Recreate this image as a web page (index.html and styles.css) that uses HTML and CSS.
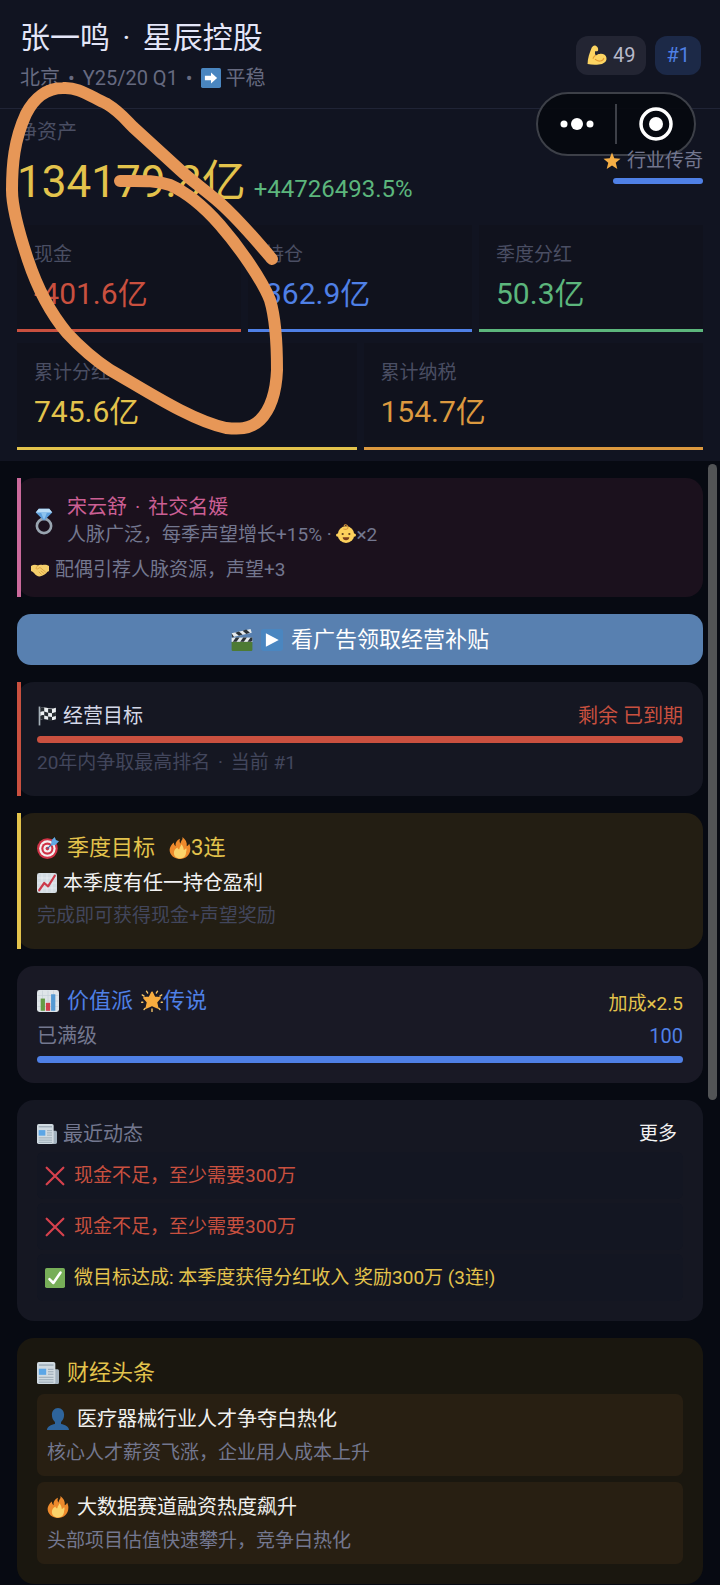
FILE: index.html
```html
<!DOCTYPE html>
<html lang="zh-CN">
<head>
    <meta charset="UTF-8">
    <meta name="viewport" content="width=device-width, initial-scale=1.0">
    <title>星辰控股</title>
    <link rel="stylesheet" href="styles.css">
</head>
<body>
    <!-- Icon set -->
    <svg class="sprite" aria-hidden="true">
        <symbol id="i-arrow" viewBox="0 0 36 36">
            <rect width="36" height="36" rx="3" fill="#4a86c0"/>
            <path fill="#fff" d="M29 18 18 8v6H7v8h11v6z"/>
        </symbol>
        <symbol id="i-muscle" viewBox="0 0 36 36">
            <path fill="#fcd462" d="M15 1c-3-1-6 2-7 5C5 14 1 24 1 34c8 2 19 2 26 0 6-2 9-6 8-11s-6-8-12-7c-3 0-5 1-7 3-2-2-2-5-1-8 3 1 5 0 5-2 1-3-2-7-5-8z"/>
            <path fill="none" stroke="#e39a33" stroke-width="2" stroke-linecap="round" d="M15 19c-2 1-3 3-4 5m4 2c5 5 14 3 15-2"/>
        </symbol>
        <symbol id="i-star" viewBox="0 0 36 36">
            <path fill="#f5ae45" d="M18 1l4.600 11.400L35 13.300l-9.500 8L28.600 34 18 27.200 7.400 34l3.100-12.700L1 13.300l12.400-.9z"/>
        </symbol>
        <symbol id="i-ring" viewBox="0 0 26 36">
            <circle cx="13" cy="24" r="9.500" fill="none" stroke="#99a5b0" stroke-width="3.500"/>
            <path fill="#5d9fdc" d="M6 1h14l4 5-11 11L2 6z"/>
            <path fill="#b9dcf5" d="M6 1h14l4 5H2z"/>
            <path fill="#8cc3ee" d="M9 6h8l-4 10z"/>
        </symbol>
        <symbol id="i-baby" viewBox="0 0 36 36">
            <circle cx="18" cy="19" r="15" fill="#fcd05c"/>
            <circle cx="3" cy="20" r="3" fill="#fcd05c"/>
            <circle cx="33" cy="20" r="3" fill="#fcd05c"/>
            <path fill="none" stroke="#e09b3d" stroke-width="2" stroke-linecap="round" d="M14 9c5 2 9-1 7-5s-7-3-6 0"/>
            <circle cx="12" cy="18" r="2" fill="#5d3b1c"/>
            <circle cx="24" cy="18" r="2" fill="#5d3b1c"/>
            <path fill="#7a3d1c" d="M12 24h12c0 7-12 7-12 0z"/>
        </symbol>
        <symbol id="i-shake" viewBox="0 0 36 36">
            <path fill="#f5cf6b" d="M0 10c5-3 9-3 14-1 2-2 6-2 9-1 4-1 9-1 13 2v10c-2 1-4 2-5 4-4 4-9 6-14 7-4 0-8-3-11-7-2-2-4-3-6-4z"/>
            <path fill="none" stroke="#d69a3a" stroke-width="1.500" stroke-linecap="round" d="M14 9c-3 3-5 6-3 7s4-2 7-3l11 9m-9-2 6 5m-10-3 5 5"/>
        </symbol>
        <symbol id="i-clap" viewBox="0 0 36 36">
            <rect x="1" y="20" width="34" height="16" rx="2" fill="#4d7a34"/>
            <rect x="1" y="14" width="34" height="7" fill="#e5eaee"/>
            <path fill="#2b3238" d="M3 21l5-7h6l-5 7zm12 0 5-7h6l-5 7zm12 0 5-7h3v5l-2 2z"/>
            <path fill="#e5eaee" d="M1 7 32 0l2 6L3 13z"/>
            <path fill="#2b3238" d="M7 6l6 5 6-2-6-5zm12-3 6 5 6-2-6-5zM1 7l4 6-3 1z"/>
        </symbol>
        <symbol id="i-play" viewBox="0 0 36 36">
            <rect width="36" height="36" rx="4" fill="#4a86c0"/>
            <path fill="#fff" d="M8 7l21 11L8 29z"/>
        </symbol>
        <symbol id="i-flag" viewBox="0 0 36 36">
            <path fill="#a5b0b8" d="M3 1h3v34H3z"/>
            <path fill="#eef1f3" d="M6 4c8-5 13 4 28-1v21c-14 5-20-4-28 1z"/>
            <path fill="#262b30" d="M6 4c3-2 5-2 7-1v7c-2-1-4-1-7 1zm14 1 7 1v7l-7-1zm-7 5 7 2v7l-7-2zm14 3 7-2v7l-7 2zM6 18c3-2 5-2 7-1v7c-2-1-4-1-7 1zm14 1 7 1v7l-7-1z"/>
        </symbol>
        <symbol id="i-dart" viewBox="0 0 36 36">
            <circle cx="17" cy="19" r="17" fill="#d03347"/>
            <circle cx="17" cy="19" r="13.500" fill="#f3f0f0"/>
            <circle cx="17" cy="19" r="10" fill="#d03347"/>
            <circle cx="17" cy="19" r="6.500" fill="#f3f0f0"/>
            <circle cx="17" cy="19" r="3" fill="#d03347"/>
            <path stroke="#3b6fa8" stroke-width="2" d="M17 19 29 7"/>
            <path fill="#62a9e4" d="M24 5l5-5 2 5 5 2-6 6-7 1z"/>
        </symbol>
        <symbol id="i-fire" viewBox="0 0 36 36">
            <path fill="#ee8a2c" d="M35 19c0-3-1-6-2-8-1 2-2 3-4 4 1-6-2-11-7-15 1 5-3 6-3 11-2-2-2-5-1-8-5 2-8 7-7 12-2-1-3-3-3-6-4 3-7 8-7 12 0 9 8 15 17 15s17-6 17-17z"/>
            <path fill="#fbd36a" d="M28 24c1-2 1-4 0-6-1 2-2 3-4 3 0-3-1-6-4-9 0 3-3 5-3 8-2 0-3-1-3-3-4 2-6 5-6 9 0 5 4 9 10 9s10-4 10-11z"/>
        </symbol>
        <symbol id="i-up" viewBox="0 0 36 36">
            <rect width="36" height="36" rx="4" fill="#d3dce2"/>
            <path stroke="#f2f5f7" stroke-width="1" d="M9 1v34M18 1v34M27 1v34M1 9h34M1 18h34M1 27h34"/>
            <path fill="none" stroke="#cc3a4a" stroke-width="4" stroke-linejoin="round" stroke-linecap="round" d="M4 31l9-13 7 6L32 5"/>
        </symbol>
        <symbol id="i-bars" viewBox="0 0 36 36">
            <rect width="36" height="36" rx="4" fill="#dfe5e9"/>
            <path stroke="#c3ced6" stroke-width="1" d="M9 1v34M18 1v34M27 1v34M1 9h34M1 18h34M1 27h34"/>
            <rect x="6" y="14" width="7" height="20" fill="#659b45"/>
            <rect x="14.500" y="21" width="7" height="13" fill="#cf3c4b"/>
            <rect x="23" y="7" width="7" height="27" fill="#569ad3"/>
        </symbol>
        <symbol id="i-glow" viewBox="0 0 36 36">
            <path fill="none" stroke="#fac96a" stroke-width="2.200" stroke-linecap="round" d="M9 2l2 3M27 2l-2 3M1 20h2M33 20h2M5 32l2-2M31 32l-2-2M18 31v4M2 8l3 2M34 8l-3 2"/>
            <path fill="#f8ad3f" stroke="#f8ad3f" stroke-width="3" stroke-linejoin="round" d="M18 4l4 8 9 1-6 7 2 9-9-4-9 4 2-9-6-7 9-1z"/>
        </symbol>
        <symbol id="i-news" viewBox="0 0 36 36">
            <path fill="#a3b2bf" d="M28 12h5c2 0 3 1 3 3v18c0 2-1 3-3 3h-5z"/>
            <rect width="30" height="36" rx="3" fill="#d0dae1"/>
            <path stroke="#93a3b0" stroke-width="2" d="M3 5h24"/>
            <rect x="3" y="11" width="12" height="10" fill="#5ca6e6"/>
            <path stroke="#93a3b0" stroke-width="1.500" d="M18 12h9M18 16h9M18 20h9M3 25h24M3 29h24M3 33h24"/>
        </symbol>
        <symbol id="i-cross" viewBox="0 0 36 36">
            <path stroke="#d6414d" stroke-width="4" stroke-linecap="round" d="M3 3l30 30M33 3 3 33"/>
        </symbol>
        <symbol id="i-check" viewBox="0 0 36 36">
            <rect width="36" height="36" rx="3" fill="#77ae58"/>
            <path fill="none" stroke="#fff" stroke-width="4.500" stroke-linecap="round" stroke-linejoin="round" d="M8 20l7 7L28 8"/>
        </symbol>
        <symbol id="i-user" viewBox="0 0 36 36">
            <path fill="#2e649c" d="M18 0c6 0 10 5 10 11 0 5-2 9-5 12v3c6 1 13 4 13 10H0c0-6 7-9 13-10v-3c-3-3-5-7-5-12C8 5 12 0 18 0z"/>
        </symbol>
    </svg>

    <div class="top">
        <header class="header">
            <div>
                <h1 class="name">张一鸣 <span class="sep">·</span> 星辰控股</h1>
                <p class="place">北京 <span class="sep">•</span> Y25/20 Q1 <span class="sep">•</span> <svg class="icon"><use href="#i-arrow"/></svg> 平稳</p>
            </div>
            <div class="chips">
                <span class="chip"><svg class="icon"><use href="#i-muscle"/></svg>49</span>
                <span class="chip chip-rank">#1</span>
            </div>
        </header>

        <section class="worth">
            <div>
                <p class="worth-label">净资产</p>
                <p class="worth-row"><span class="worth-value">134179.8亿</span><span class="worth-change">+44726493.5%</span></p>
            </div>
            <div class="fame">
                <p class="fame-text"><svg class="icon"><use href="#i-star"/></svg>行业传奇</p>
                <div class="fame-bar"></div>
            </div>
        </section>

        <section class="stats">
            <div class="stat red">
                <p class="stat-label">现金</p>
                <p class="stat-value">-401.6亿</p>
            </div>
            <div class="stat blue">
                <p class="stat-label">持仓</p>
                <p class="stat-value">362.9亿</p>
            </div>
            <div class="stat green">
                <p class="stat-label">季度分红</p>
                <p class="stat-value">50.3亿</p>
            </div>
            <div class="stat wide yellow">
                <p class="stat-label">累计分红</p>
                <p class="stat-value">745.6亿</p>
            </div>
            <div class="stat wide orange">
                <p class="stat-label">累计纳税</p>
                <p class="stat-value">154.7亿</p>
            </div>
        </section>

        <div class="capsule">
            <button class="capsule-btn" aria-label="更多">
                <svg width="36" height="14" viewBox="0 0 36 14" fill="#fff"><circle cx="5" cy="7" r="3.500"/><circle cx="18" cy="7" r="6"/><circle cx="31" cy="7" r="3.500"/></svg>
            </button>
            <button class="capsule-btn" aria-label="关闭">
                <svg width="34" height="34" viewBox="0 0 34 34"><circle cx="17" cy="17" r="15" fill="none" stroke="#fff" stroke-width="3.500"/><circle cx="17" cy="17" r="7" fill="#fff"/></svg>
            </button>
        </div>
    </div>

    <main class="main">
        <section class="card spouse edge">
            <div class="spouse-head">
                <svg class="ring"><use href="#i-ring"/></svg>
                <div>
                    <h2 class="spouse-name">宋云舒 <span class="sep">·</span> 社交名媛</h2>
                    <p class="spouse-text">人脉广泛，每季声望增长+15% · <svg class="icon"><use href="#i-baby"/></svg>×2</p>
                </div>
            </div>
            <p class="spouse-text spouse-note"><svg class="icon"><use href="#i-shake"/></svg>配偶引荐人脉资源，声望+3</p>
        </section>

        <button class="ad-btn">
            <svg class="icon"><use href="#i-clap"/></svg>
            <svg class="icon"><use href="#i-play"/></svg>
            看广告领取经营补贴
        </button>

        <section class="card edge goal">
            <div class="row line">
                <h2 class="with-icon"><svg class="icon"><use href="#i-flag"/></svg>经营目标</h2>
                <span class="red">剩余 已到期</span>
            </div>
            <div class="progress"></div>
            <p class="hint goal-hint">20年内争取最高排名 <span class="sep">·</span> 当前 #1</p>
        </section>

        <section class="card edge quarter">
            <h2 class="title yellow">
                <span class="with-icon"><svg class="icon"><use href="#i-dart"/></svg>季度目标</span>
                <span class="streak"><svg class="icon"><use href="#i-fire"/></svg>3连</span>
            </h2>
            <p class="line with-icon task"><svg class="icon"><use href="#i-up"/></svg>本季度有任一持仓盈利</p>
            <p class="hint">完成即可获得现金+声望奖励</p>
        </section>

        <section class="card style-card">
            <div class="row">
                <h2 class="title blue">
                    <span class="with-icon"><svg class="icon"><use href="#i-bars"/></svg>价值派</span>
                    <span class="level"><svg class="icon"><use href="#i-glow"/></svg>传说</span>
                </h2>
                <span class="bonus yellow">加成×2.5</span>
            </div>
            <div class="row line task">
                <span class="muted">已满级</span>
                <span class="blue">100</span>
            </div>
            <div class="progress"></div>
        </section>

        <section class="card">
            <div class="row line">
                <h2 class="with-icon muted"><svg class="icon"><use href="#i-news"/></svg>最近动态</h2>
                <button class="more-btn">更多</button>
            </div>
            <ul class="log">
                <li class="log-item red"><svg class="icon"><use href="#i-cross"/></svg>现金不足，至少需要300万</li>
                <li class="log-item red"><svg class="icon"><use href="#i-cross"/></svg>现金不足，至少需要300万</li>
                <li class="log-item yellow"><svg class="icon"><use href="#i-check"/></svg>微目标达成: 本季度获得分红收入 奖励300万 (3连!)</li>
            </ul>
        </section>

        <section class="card headlines">
            <h2 class="title with-icon yellow"><svg class="icon"><use href="#i-news"/></svg>财经头条</h2>
            <article class="story">
                <h3 class="story-title"><svg class="icon"><use href="#i-user"/></svg>医疗器械行业人才争夺白热化</h3>
                <p class="story-text">核心人才薪资飞涨，企业用人成本上升</p>
            </article>
            <article class="story">
                <h3 class="story-title"><svg class="icon"><use href="#i-fire"/></svg>大数据赛道融资热度飙升</h3>
                <p class="story-text">头部项目估值快速攀升，竞争白热化</p>
            </article>
        </section>

        <div class="scroll-thumb"></div>
    </main>

    <!-- Hand-drawn marker loop -->
    <svg class="marker" width="290" height="440" viewBox="0 0 290 440" aria-hidden="true">
        <path d="M120 181C140 181 155 180 170 185C190 194 206 209 220 225C240 248 262 280 270 300C276 320 277 350 277 370C276 395 270 410 260 420C250 430 237 429 226 428C190 420 145 390 110 370C95 360 80 347 67 333C52 315 38 290 28 260C18 230 12 205 12 190C12 165 14 140 26 114C34 98 47 88 63 88C78 87 88 95 107 104C120 112 126 120 133 127L180 170C192 181 205 190 220 203C238 219 256 240 272 259"/>
    </svg>
</body>
</html>
```
FILE: styles.css
```css
* {
    box-sizing: border-box;
}
body {
    font-family: Roboto, "Noto Sans CJK SC", sans-serif;
    background-color: #070a12;
    color: #d4d8e8;
    margin: 0;
    font-size: 20px;
    position: relative;
}
h1, h2, h3, p, ul {
    margin: 0;
    padding: 0;
    font-size: 20px;
    font-weight: normal;
}
button {
    font-family: inherit;
    border: none;
    padding: 0;
    cursor: pointer;
}
.sprite {
    display: none;
}
.icon {
    width: 20px;
    height: 20px;
    flex: none;
    vertical-align: -3px;
}
.sep {
    margin: 0 3px;
}

/* text colours */
.red {
    color: #c9503f;
}
.blue {
    color: #4f80e6;
}
.green {
    color: #5cb67c;
}
.yellow {
    color: #e3c34c;
}
.orange {
    color: #dc993f;
}
.muted {
    color: #73778f;
}

/* top panel */
.top {
    background-color: #111421;
    position: relative;
}
.header {
    display: flex;
    justify-content: space-between;
    align-items: center;
    padding: 18px 19px 16px 20px;
    border-bottom: 1px solid #202436;
}
.name {
    font-size: 30px;
    line-height: 40px;
    color: #e4e6f8;
}
.name .sep {
    margin: 0 5px;
}
.place {
    margin-top: 6px;
    line-height: 28px;
    color: #666a80;
}
.chips {
    display: flex;
    gap: 9px;
}
.chip {
    display: flex;
    align-items: center;
    gap: 6px;
    height: 39px;
    padding: 0 11px;
    border-radius: 12px;
    background-color: #232533;
    color: #b7bacb;
}
.chip-rank {
    background-color: #1c2947;
    color: #4f80e6;
}
.worth {
    display: flex;
    justify-content: space-between;
    align-items: center;
    padding: 10px 17px 16px;
}
.worth-label {
    line-height: 26px;
    color: #4a4e63;
}
.worth-row {
    display: flex;
    align-items: baseline;
    gap: 8px;
    margin-top: 10px;
}
.worth-value {
    font-size: 44px;
    line-height: 54px;
    color: #e3c34c;
}
.worth-change {
    font-size: 24px;
    line-height: 30px;
    color: #5cb67c;
}
.fame {
    position: relative;
    z-index: 2;
    margin-top: 4px;
}
.fame-text {
    display: flex;
    align-items: center;
    gap: 6px;
    font-size: 19px;
    line-height: 26px;
    color: #73778f;
}
.fame-text .icon {
    width: 18px;
}
.fame-bar {
    width: 90px;
    height: 6px;
    margin: 4px 0 0 auto;
    border-radius: 3px;
    background-color: #4f80e6;
}
.stats {
    display: grid;
    grid-template-columns: repeat(6, 1fr);
    gap: 11px 7px;
    padding: 0 17px 11px;
}
.stat {
    grid-column: span 2;
    padding: 17px 17px 15px;
    background-color: #10121d;
    border-bottom: 3px solid currentColor;
}
.wide {
    grid-column: span 3;
}
.stat-label {
    font-size: 19px;
    line-height: 26px;
    color: #4a4e63;
}
.stat-value {
    margin-top: 6px;
    font-size: 30px;
    line-height: 40px;
}

/* floating menu capsule */
.capsule {
    position: absolute;
    top: 92px;
    right: 24px;
    display: flex;
    align-items: center;
    width: 160px;
    height: 64px;
    border: 2px solid #3d4048;
    border-radius: 32px;
    background-color: rgba(6, 8, 14, 0.9);
}
.capsule-btn {
    display: flex;
    flex: 1;
    align-items: center;
    justify-content: center;
    height: 40px;
    background: none;
}
.capsule-btn + .capsule-btn {
    border-left: 2px solid #3d4048;
}

/* cards */
.main {
    display: flex;
    flex-direction: column;
    gap: 17px;
    padding: 17px 17px 2px;
    position: relative;
}
.card {
    position: relative;
    padding: 19px 20px 20px;
    border-radius: 17px;
    background-color: #151722;
}
.edge::before {
    content: "";
    position: absolute;
    top: 0;
    bottom: 0;
    left: 0;
    width: 4px;
    background-color: #c9503f;
}
.spouse {
    padding: 15px 14px 13px;
    background-color: #1b111d;
}
.spouse.edge::before {
    background-color: #cb6a9c;
}
.spouse-head {
    display: flex;
    align-items: center;
    gap: 10px;
}
.ring {
    width: 26px;
    height: 27px;
}
.spouse-name {
    line-height: 28px;
    color: #cb5f94;
}
.spouse-text {
    font-size: 19px;
    line-height: 28px;
    color: #73778f;
}
.spouse-note {
    display: flex;
    align-items: center;
    gap: 6px;
    margin-top: 7px;
}
.spouse-note .icon {
    width: 18px;
}
.ad-btn {
    display: flex;
    align-items: center;
    justify-content: center;
    gap: 8px;
    height: 51px;
    border-radius: 14px;
    background-color: #5880b0;
    color: #fff;
    font-size: 22px;
    line-height: 32px;
}
.ad-btn .icon,
.title .icon,
.story-title .icon {
    width: 22px;
    height: 22px;
}
.row {
    display: flex;
    justify-content: space-between;
    align-items: center;
}
.line {
    line-height: 30px;
}
.with-icon {
    display: flex;
    align-items: center;
    gap: 6px;
}
.title {
    display: flex;
    align-items: center;
    gap: 8px;
    font-size: 22px;
    line-height: 32px;
}
.title .with-icon {
    gap: 8px;
}
.streak,
.level {
    display: flex;
    align-items: center;
}
.streak {
    margin-left: 6px;
}
.progress {
    height: 7px;
    margin-top: 5px;
    border-radius: 4px;
    background-color: #c9503f;
}
.hint {
    margin-top: 4px;
    font-size: 19px;
    line-height: 27px;
    color: #42465c;
}
.goal-hint {
    margin-top: 6px;
}
.quarter {
    background-color: #231e13;
}
.quarter.edge::before {
    background-color: #e3c34c;
}
.task {
    margin-top: 4px;
}
.quarter .task {
    color: #f2f2f2;
}
.style-card {
    background-color: #191925;
}
.style-card .progress {
    background-color: #4f80e6;
}
.bonus {
    font-size: 19px;
}
.more-btn {
    margin-right: 6px;
    background: none;
    color: #f2f2f2;
    font-size: 19px;
    line-height: 30px;
}
.log {
    display: flex;
    flex-direction: column;
    gap: 4px;
    margin-top: 3px;
    list-style: none;
}
.log-item {
    display: flex;
    align-items: center;
    gap: 9px;
    height: 47px;
    padding: 0 8px;
    border-radius: 6px;
    background-color: #131622;
    font-size: 19px;
    line-height: 27px;
}
.headlines {
    background-color: #1a170f;
}
.story {
    margin-top: 6px;
    padding: 9px 10px 10px;
    border-radius: 7px;
    background-color: #281f12;
}
.title + .story {
    margin-top: 5px;
}
.story-title {
    display: flex;
    align-items: center;
    gap: 8px;
    line-height: 32px;
    color: #f0f0ee;
}
.story-text {
    margin-top: 4px;
    font-size: 19px;
    line-height: 27px;
    color: #73778f;
}
.scroll-thumb {
    position: absolute;
    top: 3px;
    right: 3px;
    width: 9px;
    height: 56.5%;
    border-radius: 5px;
    background-color: #525456;
}
.marker {
    position: absolute;
    top: 0;
    left: 0;
    z-index: 3;
    pointer-events: none;
}
.marker path {
    fill: none;
    stroke: #e79757;
    stroke-width: 12px;
    stroke-linecap: round;
    stroke-linejoin: round;
}
```
